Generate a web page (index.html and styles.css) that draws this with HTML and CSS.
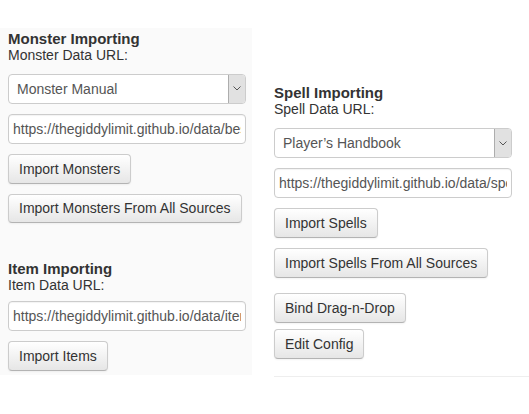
FILE: index.html
```html
<!DOCTYPE html>
<html>
<head>
<meta charset="utf-8">
<link rel="stylesheet" href="styles.css">
</head>
<body>
<div class="page">
  <div class="col col-left">
    <h3 class="heading">Monster Importing</h3>
    <div class="label">Monster Data URL:</div>
    <div class="select"><span class="select-text">Monster Manual</span><span class="arrow"><svg width="8" height="5" viewBox="0 0 8 5"><path d="M0.5 0.5 L4 4 L7.5 0.5" fill="none" stroke="#555" stroke-width="1"/></svg></span></div>
    <input class="field" type="text" readonly value="https://thegiddylimit.github.io/data/bestiary/bestiary-mm.json">
    <button class="btn">Import Monsters</button>
    <button class="btn">Import Monsters From All Sources</button>

    <h3 class="heading heading-second">Item Importing</h3>
    <div class="label">Item Data URL:</div>
    <input class="field field-tight" type="text" readonly value="https://thegiddylimit.github.io/data/items.json">
    <button class="btn">Import Items</button>
  </div>
  <div class="col col-right">
    <h3 class="heading">Spell Importing</h3>
    <div class="label">Spell Data URL:</div>
    <div class="select"><span class="select-text">Player’s Handbook</span><span class="arrow"><svg width="8" height="5" viewBox="0 0 8 5"><path d="M0.5 0.5 L4 4 L7.5 0.5" fill="none" stroke="#555" stroke-width="1"/></svg></span></div>
    <input class="field" type="text" readonly value="https://thegiddylimit.github.io/data/spells/spells-phb.json">
    <button class="btn">Import Spells</button>
    <button class="btn">Import Spells From All Sources</button>
    <button class="btn btn-gap">Bind Drag-n-Drop</button>
    <button class="btn btn-close">Edit Config</button>
    <hr class="rule">
  </div>
</div>
</body>
</html>
```

FILE: styles.css
```css
html, body {
  margin: 0;
  padding: 0;
  background: #fff;
}
body {
  font-family: "Liberation Sans", Arial, sans-serif;
  font-size: 14px;
  color: #333;
}
.page {
  display: flex;
  align-items: flex-start;
  padding-top: 28px;
}
.col {
  display: flex;
  flex-direction: column;
  align-items: flex-start;
  box-sizing: border-box;
}
.col-left {
  width: 252px;
  padding: 2px 6px 4px 8px;
  background: #fafafa;
  height: 347px;
}
.col-right {
  margin-left: 22px;
  padding-top: 56px;
  flex: 1;
}
.heading {
  margin: 0;
  font-size: 15px;
  font-weight: bold;
  line-height: 17px;
  color: #333;
}
.heading-second {
  margin-top: 37px;
}
.label {
  font-size: 14px;
  line-height: 17px;
  color: #333;
}
.select {
  margin-top: 10px;
  width: 238px;
  height: 30px;
  box-sizing: border-box;
  border: 1px solid #ccc;
  border-radius: 4px;
  background: #fff;
  display: flex;
  align-items: stretch;
  justify-content: space-between;
}
.select-text {
  display: flex;
  align-items: center;
  padding-left: 8px;
  color: #555;
  font-size: 14px;
}
.arrow {
  width: 16px;
  margin: 0 0 0 0;
  background: #e1e1e1;
  border-left: 1px solid #adadad;
  border-radius: 0 3px 3px 0;
  display: flex;
  align-items: center;
  justify-content: center;
}
.field {
  margin-top: 10px;
  width: 238px;
  height: 30px;
  box-sizing: border-box;
  border: 1px solid #ccc;
  border-radius: 4px;
  padding: 4px 4px;
  font-family: "Liberation Sans", Arial, sans-serif;
  font-size: 14px;
  color: #555;
  background: #fff;
  outline: none;
  box-shadow: inset 0 1px 1px rgba(0,0,0,0.05);
}
.field-tight {
  margin-top: 7px;
}
.btn {
  margin-top: 10px;
  height: 30px;
  box-sizing: border-box;
  padding: 0 10px;
  font-family: "Liberation Sans", Arial, sans-serif;
  font-size: 14px;
  line-height: 20px;
  color: #333;
  background: linear-gradient(to bottom, #ffffff, #e6e6e6);
  border: 1px solid #ccc;
  border-bottom-color: #b3b3b3;
  border-radius: 4px;
  box-shadow: inset 0 1px 0 rgba(255,255,255,0.2), 0 1px 2px rgba(0,0,0,0.05);
  cursor: pointer;
}
.btn-gap {
  margin-top: 15px;
}
.btn-close {
  margin-top: 6px;
}
.rule {
  align-self: stretch;
  margin: 17px 0 0 0;
  border: 0;
  border-top: 1px solid #eee;
  border-bottom: 1px solid #fff;
  height: 0;
}
```
